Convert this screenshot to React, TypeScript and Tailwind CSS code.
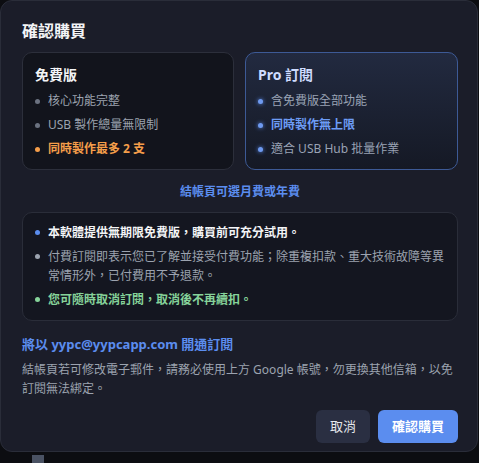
import React from "react";

const font = { fontFamily: '"Noto Sans", "Noto Sans CJK TC", sans-serif' };

function Dot({ c, glow }: { c: string; glow?: boolean }) {
  return (
    <span
      className={`mt-[6.5px] h-[5px] w-[5px] shrink-0 rounded-full ${c} ${glow ? "shadow-[0_0_4px_#5b8def]" : ""}`}
    />
  );
}

export default function App() {
  return (
    <div className="w-[479px] h-[463px] bg-[#0c0d11] overflow-hidden" style={font}>
      <div className="w-[478px] h-[452px] rounded-[12px] border border-[#2a2d39] bg-[#1b1d29] pl-[21px] pr-[19px] pt-[18px]">
        <h1 className="text-[16px] leading-[24px] font-bold text-[#f3f4f6]">確認購買</h1>
        <div className="mt-[9px] flex gap-[11px]">
          <div className="w-[212px] shrink-0 h-[118px] rounded-[10px] border border-[#2c2f3b] bg-[#12141c] px-[12px] pt-[12px]">
            <div className="text-[14px] leading-[20px] font-bold text-[#f3f4f6]">免費版</div>
            <ul className="mt-[7px] flex flex-col gap-[6px] text-[12px] leading-[18px]">
              <li className="flex gap-[8px] text-[#9ca3af]"><Dot c="bg-[#6b7280]" />核心功能完整</li>
              <li className="flex gap-[8px] text-[#9ca3af]"><Dot c="bg-[#6b7280]" />USB 製作總量無限制</li>
              <li className="flex gap-[8px] font-bold text-[#f59e4a]"><Dot c="bg-[#f59e4a]" />同時製作最多 2 支</li>
            </ul>
          </div>
          <div className="w-[213px] shrink-0 h-[118px] rounded-[10px] border border-[#3d5a96] bg-gradient-to-b from-[#222a40] to-[#151925] px-[12px] pt-[12px]">
            <div className="text-[14px] leading-[20px] font-bold text-[#cfdcff]">Pro 訂閱</div>
            <ul className="mt-[7px] flex flex-col gap-[6px] text-[12px] leading-[18px]">
              <li className="flex gap-[8px] text-[#9aa3b5]"><Dot c="bg-[#6f9af0]" glow />含免費版全部功能</li>
              <li className="flex gap-[8px] font-bold text-[#6d9cf5]"><Dot c="bg-[#6f9af0]" glow />同時製作無上限</li>
              <li className="flex gap-[8px] text-[#9aa3b5]"><Dot c="bg-[#6f9af0]" glow />適合 USB Hub 批量作業</li>
            </ul>
          </div>
        </div>
        <div className="mt-[13px] text-center text-[12px] leading-[18px] font-semibold text-[#5b8def]">
          結帳頁可選月費或年費
        </div>
        <div className="mt-[11px] rounded-[10px] border border-[#2a2d39] bg-[#141620] pl-[12px] pr-[10px] pt-[10px] pb-[11px]">
          <ul className="flex flex-col gap-[5px] text-[12px] leading-[19px]">
            <li className="flex gap-[8px] font-semibold text-[#f3f4f6]"><Dot c="bg-[#5b8def]" />本軟體提供無期限免費版，購買前可充分試用。</li>
            <li className="flex gap-[8px] text-[#9ca3af]"><Dot c="bg-[#9ca3af]" /><span>付費訂閱即表示您已了解並接受付費功能；除重複扣款、重大技術故障等異常情形外，已付費用不予退款。</span></li>
            <li className="flex gap-[8px] font-bold text-[#86d39a]"><Dot c="bg-[#86d39a]" />您可隨時取消訂閱，取消後不再續扣。</li>
          </ul>
        </div>
        <div className="mt-[13px] text-[13px] leading-[20px] font-bold text-[#5b8def]">
          將以 yypc@yypcapp.com 開通訂閱
        </div>
        <p className="mt-[6px] text-[12px] leading-[19px] text-[#9ca3af]">
          結帳頁若可修改電子郵件，請務必使用上方 Google 帳號，勿更換其他信箱，以免訂閱無法綁定。
        </p>
        <div className="mt-[12px] flex justify-end gap-[8px]">
          <button className="h-[33px] w-[54px] rounded-[6px] bg-[#2a2f42] text-[13px] text-[#e5e7eb]">取消</button>
          <button className="h-[33px] w-[80px] rounded-[6px] bg-[#5b8def] text-[13px] font-bold text-white">確認購買</button>
        </div>
      </div>
      <div className="ml-[32px] mt-[3px] h-[8px] w-[12px] bg-[#4a5263]" />
    </div>
  );
}
